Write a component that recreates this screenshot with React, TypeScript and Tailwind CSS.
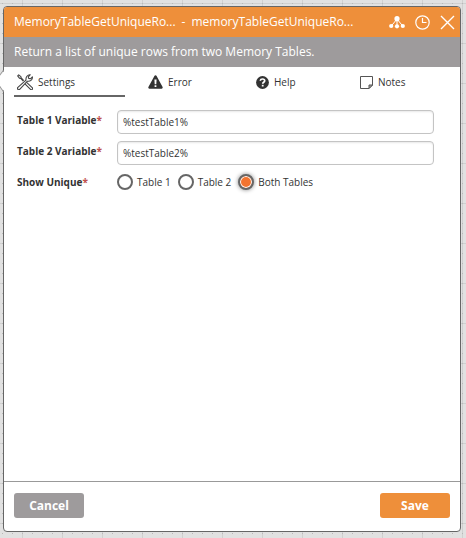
import { useState, type ReactNode } from "react";

function ToolsIcon() {
  return (
    <svg viewBox="0 0 16 16" className="h-4 w-4 shrink-0" fill="none" stroke="#444" strokeWidth="1.1" strokeLinejoin="round" aria-hidden="true">
      <path d="M8.800 7.600 15.200 13.600a1.200 1.200 0 0 1-1.700 1.700L7.200 9.200" />
      <path d="M6.800 6.600 4.200 4 3.900 2.600 1.700.9.7 1.900l1.700 2.200 1.400.3 2.500 2.700" />
      <path d="M.9 13.300 9 6.100C8.600 3.300 10.400.5 13.300.7L11.300 2.800l.4 1.600 1.700.4 2-2c.4 3.100-2.400 4.900-5 4.400L2.900 15.200a1.300 1.300 0 0 1-2-1.900Z" fill="#fff" />
    </svg>
  );
}

function WarningIcon() {
  return (
    <svg viewBox="0 0 15 14" className="h-3.5 w-[15px] shrink-0" aria-hidden="true">
      <path d="M7.5.3c.5 0 .9.3 1.1.7l6 11.1c.4.8-.1 1.6-1 1.6H1.4c-.9 0-1.4-.8-1-1.6L6.4 1c.2-.4.6-.7 1.1-.7Z" fill="#333" />
      <path d="M6.4 4.6h2.200l-.3 4.600H6.700ZM6.600 10.200h1.800v1.700H6.600Z" fill="#fff" />
    </svg>
  );
}

function HelpIcon() {
  return (
    <svg viewBox="0 0 13 13" className="h-[13px] w-[13px] shrink-0" aria-hidden="true">
      <circle cx="6.5" cy="6.5" r="6.4" fill="#333" />
      <path d="M4.2 4.8C4.5 3.5 5.3 3 6.5 3c1.300 0 2.200.7 2.200 1.700 0 1.500-2 1.500-2 3" fill="none" stroke="#fff" strokeWidth="1.700" />
      <path d="M5.800 8.800h1.800v1.700H5.800Z" fill="#fff" />
    </svg>
  );
}

function NoteIcon() {
  return (
    <svg viewBox="0 0 13 13" className="h-[13px] w-[13px] shrink-0" fill="none" stroke="#555" aria-hidden="true">
      <path d="M.5.500h12v8.500l-3.500 3.500H.5Z" />
      <path d="M12.500 9H9v3.500Z" fill="#aaa" />
    </svg>
  );
}

function NetworkIcon() {
  return (
    <svg viewBox="0 0 16 13" className="h-[13px] w-4" fill="#fff" stroke="#fff" aria-hidden="true">
      <path d="M8 3 2.300 10M8 3v7M8 3l5.700 7" fill="none" />
      <circle cx="8" cy="2.700" r="2.600" stroke="none" />
      <circle cx="2.200" cy="10" r="2.100" stroke="none" />
      <circle cx="8" cy="10.300" r="2.100" stroke="none" />
      <circle cx="13.800" cy="10" r="2.100" stroke="none" />
    </svg>
  );
}

function ClockIcon() {
  return (
    <svg viewBox="0 0 15 15" className="h-[15px] w-[15px]" fill="none" stroke="#fff" strokeWidth="1.200" aria-hidden="true">
      <circle cx="7.500" cy="7.500" r="6.700" />
      <path d="M7.500 3v4.500h4" />
    </svg>
  );
}

function CloseIcon() {
  return (
    <svg viewBox="0 0 15 15" className="h-[15px] w-[15px]" stroke="#fff" strokeWidth="1.400" aria-hidden="true">
      <path d="m1 1 13 13M14 1 1 14" />
    </svg>
  );
}

function CanvasGrid() {
  return (
    <svg className="absolute inset-0 h-full w-full" aria-hidden="true">
      <defs>
        <pattern id="canvas-dots" x="2" y="3" width="10" height="10" patternUnits="userSpaceOnUse">
          <path d="M0 0h1v1H0Z" fill="#b8b8b8" />
        </pattern>
        <pattern id="canvas-lines" x="22" y="3" width="40" height="40" patternUnits="userSpaceOnUse">
          <path d="M0 0h40v1H1v39H0Z" fill="#d0d0d0" />
        </pattern>
      </defs>
      <rect width="100%" height="100%" fill="#e1e1e1" />
      <rect width="100%" height="100%" fill="url(#canvas-lines)" />
      <rect width="100%" height="100%" fill="url(#canvas-dots)" />
    </svg>
  );
}

const tabs: { name: string; icon: ReactNode }[] = [
  { name: "Settings", icon: <ToolsIcon /> },
  { name: "Error", icon: <WarningIcon /> },
  { name: "Help", icon: <HelpIcon /> },
  { name: "Notes", icon: <NoteIcon /> },
];

function FieldName({ children }: { children: ReactNode }) {
  return (
    <>
      {children}
      <span className="text-[#c0504d]">*</span>
    </>
  );
}

function TextField({ id, label, initial }: { id: string; label: string; initial: string }) {
  return (
    <div className="flex items-center">
      <label htmlFor={id} className="w-[100px] shrink-0 pb-1 font-bold">
        <FieldName>{label}</FieldName>
      </label>
      <input
        id={id}
        defaultValue={initial}
        className="h-6 min-w-0 flex-1 rounded border border-[#c4c4c4] bg-white px-[5px] text-[10px] shadow-[inset_0_1px_2px_#00000018] outline-none"
      />
    </div>
  );
}

export default function App() {
  const [active, setActive] = useState("Settings");
  const [shown, setShown] = useState("Both Tables");

  return (
    <div className="relative flex min-h-screen flex-col pt-1.5 pr-[5px] pb-1.5 pl-[3px] font-['Open_Sans',sans-serif] text-[10px] text-[#333]">
      <CanvasGrid />
      <section className="relative flex flex-1 flex-col rounded border border-[#666] bg-white">
        <svg viewBox="0 0 4 24" className="absolute top-[62px] -left-1 h-6 w-1" aria-hidden="true">
          <path d="M4 2-4 12 4 22Z" fill="#fff" />
          <path d="M3.500 1-4 11.500 3.500 23" fill="none" stroke="#999" />
        </svg>
        <header className="flex h-[30px] items-center rounded-t-[3px] bg-[#ee8f3a] pr-[5px] pl-2.5 text-[12px] font-medium text-white">
          <h1 className="flex flex-1 gap-1.5 whitespace-nowrap">
            <span>MemoryTableGetUniqueRo...</span>
            <span>-</span>
            <span>memoryTableGetUniqueRo...</span>
          </h1>
          <div className="flex items-center gap-2.5">
            <button type="button" aria-label="Connections"><NetworkIcon /></button>
            <button type="button" aria-label="History"><ClockIcon /></button>
            <button type="button" aria-label="Close"><CloseIcon /></button>
          </div>
        </header>
        <p className="flex h-[30px] items-center bg-[#9e9b9c] px-2.5 text-[12px] font-medium text-white">
          Return a list of unique rows from two Memory Tables.
        </p>
        <nav className="grid h-[30px] grid-cols-[131px_108px_104px_1fr] pl-2.5">
          {tabs.map((tab) => (
            <button
              key={tab.name}
              type="button"
              aria-pressed={active === tab.name}
              onClick={() => setActive(tab.name)}
              className={`mr-5 flex items-center gap-[5px] border-b-2 pt-0.5 pl-[3px] ${
                active === tab.name ? "border-[#666]" : "border-transparent"
              }`}
            >
              {tab.icon}
              {tab.name}
            </button>
          ))}
        </nav>
        <form className="flex flex-1 flex-col gap-[7px] pt-[13px] pr-[26px] pl-[13px]">
          <TextField id="table-1" label="Table 1 Variable" initial="%testTable1%" />
          <TextField id="table-2" label="Table 2 Variable" initial="%testTable2%" />
          <fieldset className="flex items-center pt-0.5">
            <legend className="float-left w-[100px] font-bold">
              <FieldName>Show Unique</FieldName>
            </legend>
            <div className="flex gap-[7px]">
              {["Table 1", "Table 2", "Both Tables"].map((name) => (
                <label key={name} className="flex items-center gap-1">
                  <input
                    type="radio"
                    name="show-unique"
                    checked={shown === name}
                    onChange={() => setShown(name)}
                    className="h-4 w-4 appearance-none rounded-full border-2 border-[#666] bg-white checked:bg-[#f37430] checked:shadow-[inset_0_0_0_1px_#fff,0_0_4px_#888]"
                  />
                  {name}
                </label>
              ))}
            </div>
          </fieldset>
        </form>
        <footer className="flex h-[50px] items-start justify-between border-t border-[#999] px-2.5 pt-[11px] text-[12px] font-bold text-white">
          <button type="button" className="h-[25px] w-[70px] rounded-[3px] bg-[#9e9b9c]">Cancel</button>
          <button type="button" className="h-[25px] w-[70px] rounded-[3px] bg-[#ee8f3a]">Save</button>
        </footer>
      </section>
    </div>
  );
}
